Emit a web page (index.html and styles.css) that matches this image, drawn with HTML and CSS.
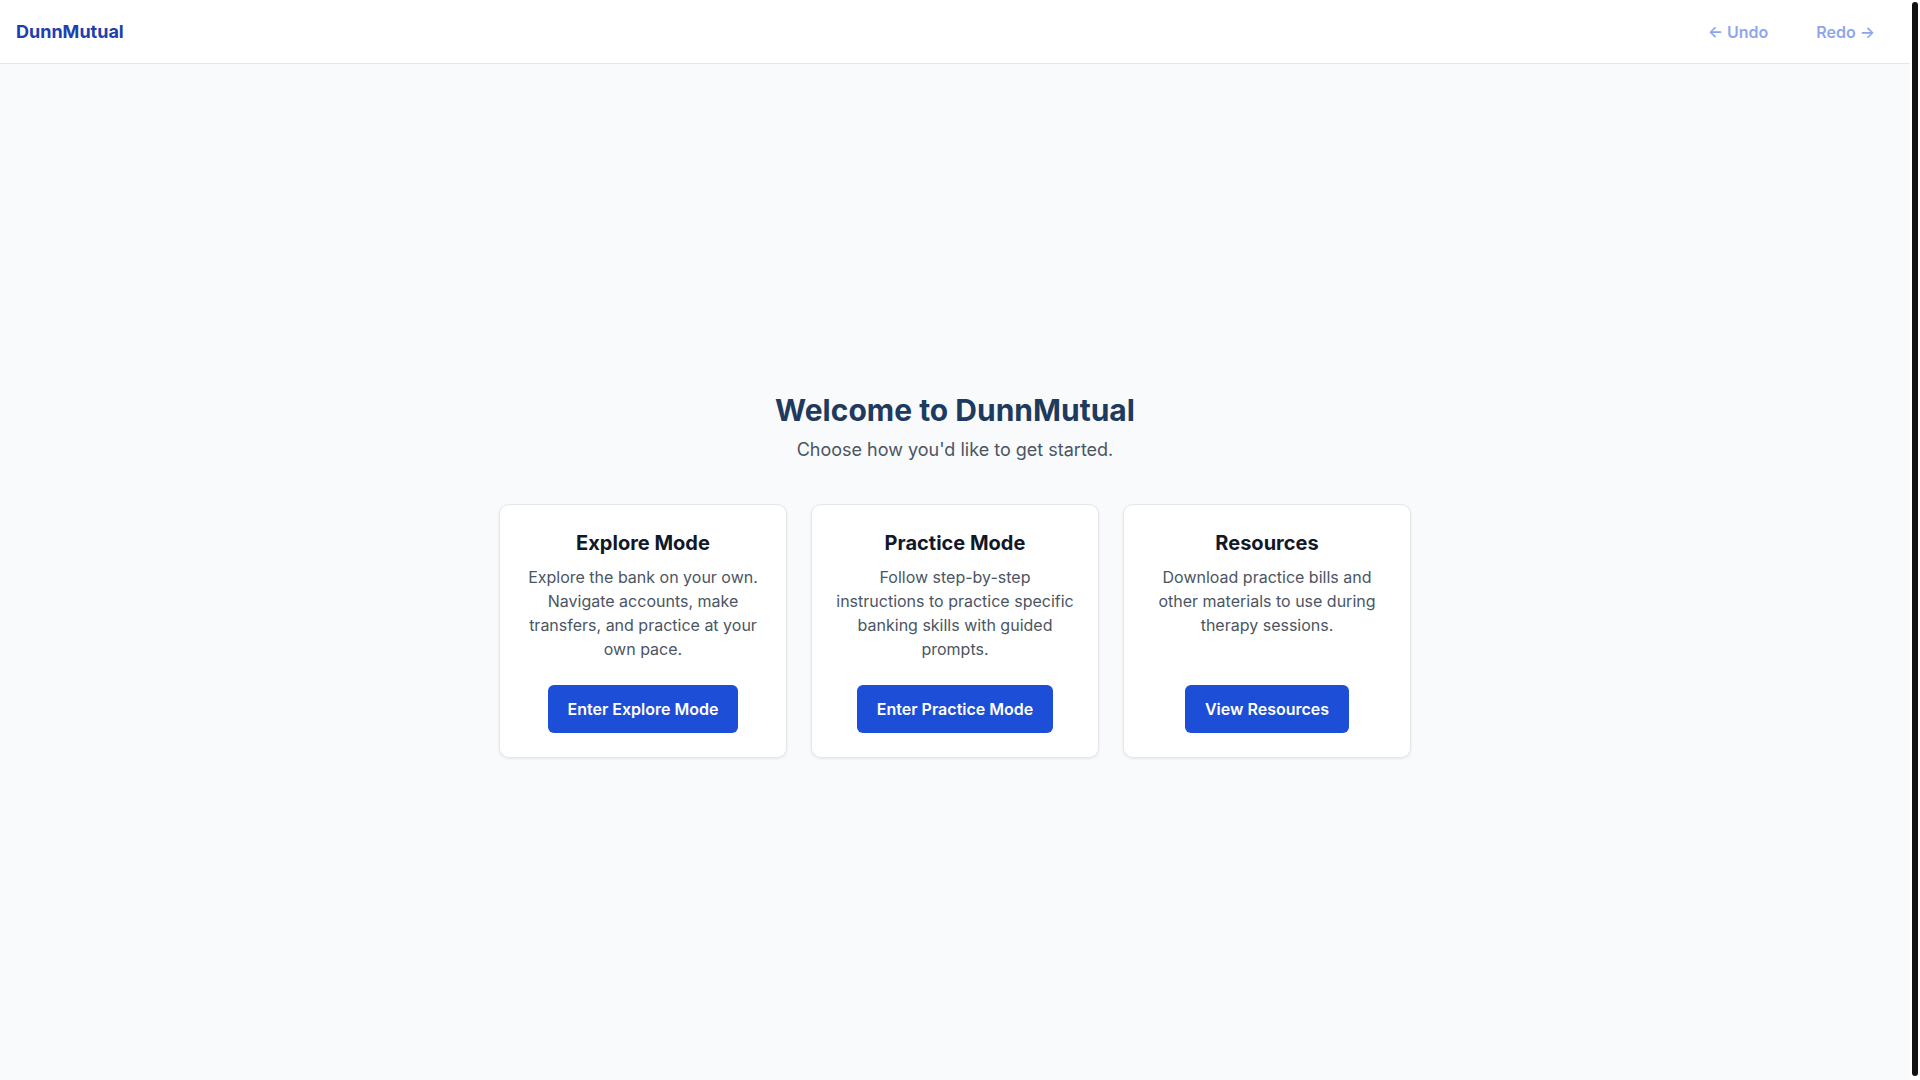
FILE: index.html
```html
<!DOCTYPE html>
<html lang="en">
<head>
    <meta charset="UTF-8">
    <meta name="viewport" content="width=device-width, initial-scale=1.0">
    <title>DunnMutual</title>
    <link rel="stylesheet" href="styles.css">
</head>
<body>

    <header class="top-bar">
        <a class="logo" href="#">DunnMutual</a>
        <nav class="history-nav">
            <button class="history-btn" disabled>&larr; Undo</button>
            <button class="history-btn" disabled>Redo &rarr;</button>
        </nav>
    </header>

    <main class="home">
        <h1 class="home-title">Welcome to DunnMutual</h1>
        <p class="home-subtitle">Choose how you'd like to get started.</p>

        <div class="mode-grid">
            <div class="mode-card">
                <h2>Explore Mode</h2>
                <p>Explore the bank on your own. Navigate accounts, make transfers, and practice at your own pace.</p>
                <button class="btn">Enter Explore Mode</button>
            </div>

            <div class="mode-card">
                <h2>Practice Mode</h2>
                <p>Follow step-by-step instructions to practice specific banking skills with guided prompts.</p>
                <button class="btn">Enter Practice Mode</button>
            </div>

            <div class="mode-card">
                <h2>Resources</h2>
                <p>Download practice bills and other materials to use during therapy sessions.</p>
                <button class="btn">View Resources</button>
            </div>
        </div>
    </main>

    <!-- custom scroll rail, sits over the right edge -->
    <div class="scroll-rail">
        <div class="scroll-thumb"></div>
    </div>

</body>
</html>
```

FILE: styles.css
```css
body {
    font-family: Inter, "Noto Sans", sans-serif;
    margin: 0;
    padding-right: 10px;
    min-height: calc(100vh + 6px);
    display: flex;
    flex-direction: column;
    background-color: #f8fafc;
    color: #111827;
}
.scroll-rail {
    position: fixed;
    top: 0;
    right: 0;
    bottom: 0;
    width: 10px;
    background: #fff;
}
.scroll-thumb {
    position: absolute;
    top: 2px;
    bottom: 4px;
    left: 2px;
    right: 2px;
    background: #111;
    border-radius: 3px;
}
.top-bar {
    height: 64px;
    box-sizing: border-box;
    padding: 0 21px 0 16px;
    display: flex;
    align-items: center;
    justify-content: space-between;
    background: #fff;
    border-bottom: 1px solid #e5e7eb;
}
.logo {
    font-size: 18px;
    font-weight: 700;
    color: #1e40af;
    text-decoration: none;
}
.history-nav {
    display: flex;
    gap: 20px;
}
.history-btn {
    font-family: inherit;
    font-size: 16px;
    font-weight: 600;
    color: #1d4ed8;
    background: none;
    border: none;
    padding: 8px 14px;
    opacity: 0.5;
}
.home {
    flex: 1;
    display: flex;
    flex-direction: column;
    align-items: center;
    justify-content: center;
    text-align: center;
}
.home-title {
    font-size: 30px;
    line-height: 36px;
    font-weight: 700;
    color: #1e3a5f;
    margin: 0 0 8px;
}
.home-subtitle {
    font-size: 18px;
    line-height: 28px;
    color: #4b5563;
    margin: 0 0 40px;
}
.mode-grid {
    display: grid;
    grid-template-columns: repeat(3, 288px);
    gap: 24px;
}
.mode-card {
    box-sizing: border-box;
    display: flex;
    flex-direction: column;
    align-items: center;
    padding: 24px;
    background: #fff;
    border: 1px solid #e5e7eb;
    border-radius: 10px;
    box-shadow: 0 1px 3px rgba(0,0,0,0.08);
}
.mode-card h2 {
    font-size: 20px;
    line-height: 28px;
    font-weight: 700;
    margin: 0 0 8px;
}
.mode-card p {
    flex: 1;
    font-size: 16px;
    line-height: 24px;
    color: #4b5563;
    margin: 0;
}
.btn {
    margin-top: 24px;
    font-family: inherit;
    font-size: 16px;
    line-height: 24px;
    font-weight: 600;
    color: #fff;
    background-color: #1d4ed8;
    border: none;
    border-radius: 6px;
    padding: 12px 20px;
    cursor: pointer;
}
.btn:hover {
    background-color: #1e40af;
}
```
